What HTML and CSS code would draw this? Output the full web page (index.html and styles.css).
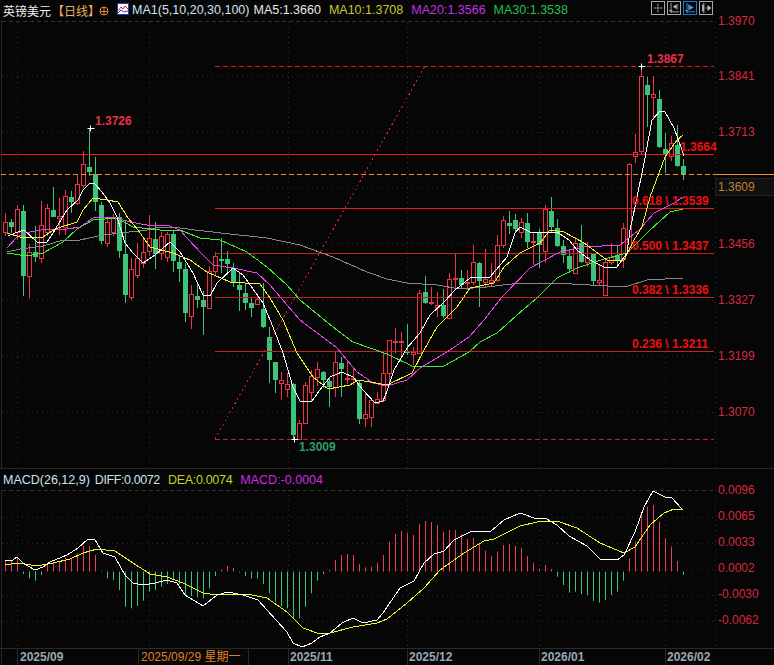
FILE: index.html
```html
<!DOCTYPE html>
<html lang="zh">
<head>
    <meta charset="UTF-8">
    <title>英镑美元 日线</title>
    <link rel="stylesheet" href="styles.css">
</head>
<body>
    <div class="topbar">
        <span class="title">英镑美元</span>
        <span class="period">【日线】</span>
        <svg class="zoom-icon" width="10" height="10" viewBox="0 0 10 10">
            <circle cx="5" cy="5" r="4" fill="none" stroke="#e08a2c"/>
            <path d="M1 5.5H9M5 1V9" stroke="#e08a2c" fill="none"/>
        </svg>
        <svg class="ma-icon" width="12" height="12" viewBox="0 0 12 12">
            <rect x="0.5" y="0.5" width="11" height="11" fill="#fff" stroke="#2a3aa8"/>
            <path d="M1 8L4 4L6 6L8 3L11 6" fill="none" stroke="#e02020"/>
            <path d="M1 10L4 7L7 9L11 8" fill="none" stroke="#2040d0"/>
        </svg>
        <span class="ma ma-name">MA1(5,10,20,30,100)</span>
        <span class="ma ma5">MA5:1.3660</span>
        <span class="ma ma10">MA10:1.3708</span>
        <span class="ma ma20">MA20:1.3566</span>
        <span class="ma ma30">MA30:1.3538</span>
        <div class="tools">
            <svg class="tool" width="14" height="14" viewBox="0 0 14 14">
                <path d="M7 2V5M7 9V12M2 7H5M9 7H12" stroke="#bbb" fill="none"/>
                <rect x="6" y="6" width="2" height="2" fill="#bbb"/>
            </svg>
            <svg class="tool" width="14" height="14" viewBox="0 0 14 14">
                <path d="M3.5 1V11.5H13M1 10H5M3.5 11V13" stroke="#bbb" fill="none"/>
                <path d="M11.5 2V9M10 3L6 5.5L10 8Z" fill="#bbb" stroke="#bbb" stroke-width="0.6"/>
            </svg>
            <svg class="tool tool-on" width="14" height="14" viewBox="0 0 14 14">
                <path d="M3.5 1V11.5H13M1 10H5M3.5 11V13" stroke="#3a9ae8" fill="none"/>
                <path d="M5 2.5L11.5 6.5L5 10Z" fill="#3a9ae8"/>
            </svg>
            <svg class="tool" width="14" height="14" viewBox="0 0 14 14">
                <path d="M4.5 1V13" stroke="#bbb" fill="none"/>
                <rect x="2.5" y="3" width="2" height="8" fill="#bbb"/>
                <path d="M5 7H9M9 4L13 7L9 10Z" fill="#bbb" stroke="#bbb" stroke-width="0.6"/>
            </svg>
        </div>
    </div>

    <svg class="chart" id="price" width="774" height="448" viewBox="0 20 774 448"></svg>

    <div class="macd-head">
        <span class="ma ma-name">MACD(26,12,9)</span>
        <span class="ma ma-name diff">DIFF:0.0072</span>
        <span class="ma dea">DEA:0.0074</span>
        <span class="ma macd">MACD:-0.0004</span>
    </div>

    <svg class="chart" id="macd" width="774" height="175" viewBox="0 490 774 175"></svg>

    <script src="chart.js"></script>
</body>
</html>
```

FILE: styles.css
```css
html, body {
    margin: 0;
    height: 100%;
    background: #060606;
    overflow: hidden;
}
body {
    font-family: "Liberation Sans", "Noto Sans CJK SC", sans-serif;
}
.topbar {
    display: flex;
    align-items: center;
    height: 20px;
    padding-left: 3px;
    box-sizing: border-box;
}
.title {
    font-family: "Noto Sans CJK SC", sans-serif;
    font-size: 12px;
    color: #f0f0f0;
}
.period {
    font-family: "Noto Sans CJK SC", sans-serif;
    font-size: 12px;
    color: #e8b060;
    width: 46px;
    margin-left: 1px;
}
.zoom-icon {
    margin-left: 1px;
    margin-top: 2px;
}
.ma-icon {
    margin-left: 8px;
    margin-bottom: 3px;
}
.ma {
    font-size: 12.5px;
    white-space: nowrap;
}
.ma-name { color: #cfe2f2; }
.ma5 { color: #e8e8e8; }
.ma10 { color: #c8c82a; }
.ma20 { color: #c030e0; }
.ma30 { color: #22c04a; }
.dea { color: #c8d020; letter-spacing: -0.3px; }
.macd { color: #d028e0; }
.diff { letter-spacing: -0.4px; }

.topbar .ma-name { margin-left: 3px; }
.topbar .ma5 { margin-left: 4px; }
.topbar .ma10, .topbar .ma20, .topbar .ma30 { margin-left: 8px; }

.tools {
    display: flex;
    gap: 2px;
    align-self: flex-start;
    margin: 1px 61px 0 auto;
}
.tool {
    border: 1px solid #a8a8a8;
    width: 12px;
    height: 12px;
}
.tool-on { border-color: #1c78c8; }

.chart {
    display: block;
    overflow: visible;
}
.chart polyline,
.chart .dotted {
    shape-rendering: crispEdges;
}
.macd-head {
    display: flex;
    gap: 8px;
    align-items: center;
    height: 22px;
    padding-left: 3px;
    box-sizing: border-box;
    border-top: 1px solid #262626;
}
.macd-head .diff { margin-left: -3px; }

.grid { stroke: #2c2c2c; stroke-dasharray: 1 4; fill: none; }
.grid-top { stroke: #333; stroke-dasharray: 4 3; fill: none; }
.frame { stroke: #2a2a2a; fill: none; }

.axis-price { font-size: 12px; fill: #d8283e; }
.axis-last { font-size: 12px; fill: #c08030; }
.last-box { fill: #101010; stroke: #222; }
.mark { font-size: 12px; font-weight: bold; fill: #e8304a; }
.mark-low { font-size: 12px; font-weight: bold; fill: #2e9c6a; }
.fib { font-size: 12px; font-weight: bold; fill: #f00f0f; }
.date { font-size: 12px; font-weight: bold; fill: #9aa8b4; }
.date-on {
    font-family: "Liberation Sans", "Noto Sans CJK SC", sans-serif;
    font-size: 12px;
    fill: #e08224;
}
```

FILE: chart.js
```js
const NS = 'http://www.w3.org/2000/svg';
const priceSvg = document.getElementById('price');
const macdSvg = document.getElementById('macd');

function add(svg, tag, attrs, text) {
    const el = document.createElementNS(NS, tag);
    for (const k in attrs) el.setAttribute(k, attrs[k]);
    if (text) el.textContent = text;
    svg.appendChild(el);
    return el;
}

function hline(svg, y, x1, x2, attrs) {
    add(svg, 'line', Object.assign({ x1: x1, x2: x2, y1: y, y2: y }, attrs));
}

function poly(svg, pts, color) {
    add(svg, 'polyline', {
        points: pts.join(' '),
        fill: 'none',
        stroke: color,
        'stroke-width': 1
    });
}

function cx(i) {
    return 5.5 + 6 * i;
}

const UP = '#ee3348';
const DOWN = '#3cc47c';
const BG = '#060606';

// up/down, wick top, body top, body bottom, wick bottom
const candles = [
    'u 213 222 232 236', 'd 219 222 227 233', 'u 205 209 232 240', 'd 205 211 276 296',
    'u 244 252 276 298', 'd 226 252 257 262', 'u 201 225 258 263', 'u 204 208 232 236',
    'd 187 210 217 217', 'u 198 216 218 235', 'u 190 196 227 235', 'd 191 197 202 213',
    'u 175 184 203 205', 'u 151 164 185 188', 'd 128 167 172 176', 'd 157 174 202 211',
    'd 202 205 241 244', 'u 217 222 243 247', 'u 214 218 232 236', 'd 213 217 251 258',
    'd 220 254 295 303', 'u 258 269 297 300', 'u 243 258 275 278', 'u 238 252 263 268',
    'u 215 238 251 256', 'd 222 239 254 269', 'u 232 236 253 260', 'u 232 234 257 262',
    'd 230 234 261 272', 'd 255 262 269 282', 'd 263 269 313 322', 'u 285 294 316 329',
    'd 282 296 300 308', 'd 291 300 307 335', 'u 266 271 308 309', 'u 252 256 271 275',
    'd 238 259 261 273', 'd 251 259 264 275', 'd 263 268 283 287', 'd 272 285 290 311',
    'd 283 293 303 310', 'd 298 303 308 317', 'u 295 299 304 305', 'd 283 309 327 328',
    'd 327 337 360 383', 'd 362 362 380 393', 'u 372 380 383 400', 'u 373 384 389 397',
    'd 383 384 435 439', 'u 420 423 439 439', 'u 382 385 423 423', 'u 370 376 392 401',
    'u 362 369 377 386', 'd 371 372 380 388', 'd 377 381 387 407', 'u 351 362 387 397',
    'd 357 363 369 397', 'u 360 378 379 384', 'u 368 378 379 385', 'd 380 383 419 424',
    'u 393 414 418 427', 'u 398 400 417 427', 'u 392 399 403 404', 'u 353 373 400 402',
    'u 340 340 373 383', 'u 328 341 342 353', 'u 332 341 342 357', 'd 324 352 353 355',
    'u 347 352 354 365', 'u 290 293 353 354', 'd 276 292 303 304', 'u 287 302 303 305',
    'u 292 305 307 317', 'd 289 305 316 318', 'u 273 279 318 319', 'u 253 278 279 288',
    'd 270 278 285 288', 'u 270 282 283 290', 'u 245 262 282 285', 'd 262 263 281 307',
    'u 249 279 282 287', 'u 263 280 282 287', 'u 235 245 280 282', 'u 216 220 245 248',
    'd 211 223 226 234', 'd 214 220 229 232', 'u 218 222 232 238', 'd 213 223 242 248',
    'u 232 241 242 265', 'd 229 233 245 268', 'u 205 209 251 263', 'd 197 211 227 232',
    'd 219 228 246 247', 'd 240 246 255 263', 'd 250 256 269 273', 'u 237 243 273 274',
    'd 225 243 262 263', 'u 242 257 262 267', 'd 253 254 281 285', 'u 265 280 282 285',
    'u 258 262 295 296', 'u 243 257 262 265', 'd 245 255 260 265', 'u 223 228 259 268',
    'u 163 164 247 252', 'u 134 152 156 163', 'u 65 76 151 154', 'd 77 85 95 127',
    'u 76 94 97 120', 'd 90 99 147 148', 'd 133 149 155 173', 'u 136 143 156 161',
    'd 125 145 166 167', 'd 159 166 174 180'
];

const ma5 = ['8,236', '15,233', '24,230', '37,242', '47,242', '55,230', '56,228', '67,210', '78,200', '83,190', '90,183', '95,184', '102,192', '110,203', '117,217', '121,230', '125,243', '133,253', '143,263', '155,255', '170,242', '180,252', '193,273', '203,295', '210,296', '217,283', '233,268', '243,275', '263,303', '273,327', '283,353', '293,387', '300,401', '312,401', '322,387', '330,377', '342,372', '353,377', '363,390', '375,403', '383,401', '387,391', '394,370', '407,348', '420,333', '430,315', '445,301', '455,290', '470,278', '490,277', '507,257', '515,233', '520,227', '530,232', '540,233', '544,232', '557,232', '569,240', '577,250', '590,260', '604,267', '617,267', '627,253', '630,230', '635,207', '644,163', '652,120', '660,111', '665,112', '674,128', '682,150', '684,156'];
const ma10 = ['7,233', '20,237', '43,237', '55,229', '77,222', '83,210', '93,198', '107,200', '118,202', '128,218', '138,230', '150,247', '173,253', '190,260', '207,272', '230,282', '260,284', '270,298', '283,320', '297,353', '313,377', '328,389', '350,385', '358,380', '370,382', '387,385', '412,373', '424,350', '437,327', '457,307', '470,288', '494,283', '504,267', '520,253', '540,243', '550,230', '564,232', '584,243', '607,260', '624,260', '634,240', '642,227', '650,197', '665,157', '677,140', '683,135'];
const ma20 = ['7,248', '17,237', '25,233', '47,229', '67,229', '80,227', '93,218', '113,217', '130,222', '147,225', '167,225', '180,230', '187,238', '203,255', '213,265', '233,268', '257,273', '270,285', '287,305', '300,320', '320,335', '337,348', '357,372', '373,383', '387,386', '407,380', '420,368', '447,352', '469,337', '484,320', '502,297', '530,268', '560,252', '584,247', '620,245', '639,230', '654,213', '674,203', '683,197'];
const ma30 = ['7,253', '27,256', '43,253', '63,242', '77,229', '93,220', '117,218', '133,227', '160,230', '180,230', '200,238', '220,240', '247,252', '267,267', '287,285', '300,300', '333,327', '353,342', '387,354', '412,366', '444,366', '469,352', '480,342', '497,333', '517,315', '537,298', '557,278', '577,268', '604,259', '627,253', '650,230', '670,212', '683,209'];
const ma100 = ['7,252', '20,249', '43,246', '63,240', '80,240', '103,235', '147,230', '160,227', '180,228', '195,230', '230,234', '267,238', '300,245', '333,257', '367,272', '387,279', '407,283', '437,285', '460,289', '487,287', '520,283', '554,283', '590,285', '625,287', '647,280', '683,278'];

// macd histogram: y of the free end of each bar, times 3
const hist = [300, 300, 290, 342, 355, 362, 345, 315, 310, 305, 292, 295, 280, 258, 258, 285, 336, 355, 360, 390, 440, 445, 438, 422, 395, 390, 380, 372, 360, 372, 405, 408, 412, 415, 385, 348, 328, 318, 324, 337, 348, 356, 355, 372, 400, 425, 440, 445, 475, 475, 440, 400, 362, 342, 330, 300, 285, 282, 285, 312, 322, 320, 308, 285, 245, 222, 213, 218, 225, 192, 183, 186, 195, 215, 210, 210, 222, 237, 233, 250, 272, 288, 275, 255, 252, 258, 263, 288, 308, 326, 315, 327, 350, 375, 398, 395, 402, 405, 423, 428, 420, 405, 395, 362, 295, 245, 165, 140, 135, 185, 235, 260, 303, 345];

const diff = ['5,560', '13,560', '17,557', '23,563', '35,570', '43,567', '50,562', '67,555', '78,548', '88,539', '95,540', '103,553', '115,557', '125,575', '133,583', '143,585', '155,583', '167,580', '177,583', '185,595', '203,606', '217,595', '228,592', '243,595', '258,600', '267,610', '287,632', '293,643', '302,647', '312,643', '320,637', '330,633', '342,623', '353,618', '363,623', '377,620', '383,613', '387,607', '400,588', '414,581', '424,563', '434,554', '444,551', '454,540', '472,531', '490,532', '504,520', '520,513', '534,518', '545,518', '557,525', '569,536', '587,546', '600,559', '617,560', '624,555', '635,532', '644,507', '653,491', '665,497', '672,498', '682,509'];
const dea = ['5,565', '18,563', '37,566', '53,563', '70,559', '83,553', '97,549', '115,551', '133,563', '150,574', '167,577', '183,583', '203,593', '217,595', '247,594', '267,598', '287,612', '303,628', '317,633', '330,633', '353,627', '377,623', '387,619', '407,603', '424,588', '440,570', '464,553', '484,541', '494,539', '520,526', '537,522', '557,521', '577,528', '600,543', '624,553', '635,547', '650,525', '664,513', '674,509', '683,510'];

// grid
const gridX = [17, 149, 288, 407, 539, 665];
[76, 132, 188, 244, 300, 356, 412].forEach(y => hline(priceSvg, y + 0.5, 2, 714, { class: 'grid' }));
hline(priceSvg, 21.5, 2, 714, { class: 'grid-top' });
gridX.forEach(x => add(priceSvg, 'line', { x1: x + 0.5, x2: x + 0.5, y1: 22, y2: 468, class: 'grid' }));
add(priceSvg, 'line', { x1: 715.5, x2: 715.5, y1: 22, y2: 468, class: 'grid' });
add(priceSvg, 'line', { x1: 1.5, x2: 1.5, y1: 20, y2: 468, class: 'frame' });

// candles
candles.forEach((row, i) => {
    const [kind, wt, top, bottom, wb] = row.split(' ');
    const x = cx(i);
    const color = kind === 'u' ? UP : DOWN;
    add(priceSvg, 'line', { x1: x, x2: x, y1: wt, y2: wb, stroke: color });
    if (kind === 'u') {
        add(priceSvg, 'rect', {
            x: x - 2, y: +top + 0.5, width: 4, height: Math.max(bottom - top, 1),
            fill: BG, stroke: color
        });
    } else {
        add(priceSvg, 'rect', { x: x - 2.5, y: top, width: 5, height: Math.max(bottom - top, 1), fill: color });
    }
});

// fibonacci and trend lines
const RED = '#f01515';
const DARK = '#c81e1e';
add(priceSvg, 'line', { x1: 215, y1: 439, x2: 425, y2: 66, stroke: '#e02020', 'stroke-dasharray': '2 3', class: 'dotted' });
hline(priceSvg, 66.5, 215, 714, { stroke: RED, 'stroke-dasharray': '5 3' });
hline(priceSvg, 154.5, 1, 714, { stroke: RED });
hline(priceSvg, 174.5, 1, 714, { stroke: '#f09030', 'stroke-dasharray': '5 3' });
hline(priceSvg, 174.5, 714, 774, { stroke: '#f09030' });
hline(priceSvg, 208.5, 215, 714, { stroke: RED });
hline(priceSvg, 253.5, 215, 714, { stroke: DARK });
hline(priceSvg, 297.5, 215, 714, { stroke: DARK });
hline(priceSvg, 351.5, 215, 714, { stroke: DARK });
hline(priceSvg, 439.5, 215, 714, { stroke: DARK, 'stroke-dasharray': '5 3' });

poly(priceSvg, ma100, '#888888');
poly(priceSvg, ma30, '#40f030');
poly(priceSvg, ma20, '#f040f0');
poly(priceSvg, ma10, '#f4f420');
poly(priceSvg, ma5, '#ffffff');

// high/low markers
[[90.5, 128.5], [641.5, 66.5], [294.5, 439.5]].forEach(([x, y]) => {
    hline(priceSvg, y, x - 3, x + 4, { stroke: '#fff' });
    add(priceSvg, 'line', { x1: x, x2: x, y1: y - 3, y2: y + 3, stroke: '#fff' });
});

// price labels
[['1.3970', 25], ['1.3841', 80], ['1.3713', 136], ['1.3456', 248], ['1.3327', 304], ['1.3199', 360], ['1.3070', 416]]
    .forEach(([t, y]) => add(priceSvg, 'text', { x: 718, y: y, class: 'axis-price' }, t));
add(priceSvg, 'rect', { x: 715.5, y: 178.5, width: 60, height: 17, class: 'last-box' });
add(priceSvg, 'text', { x: 718, y: 191, class: 'axis-last' }, '1.3609');

add(priceSvg, 'text', { x: 95, y: 125, class: 'mark' }, '1.3726');
add(priceSvg, 'text', { x: 647, y: 63, class: 'mark' }, '1.3867');
add(priceSvg, 'text', { x: 299, y: 451, class: 'mark-low' }, '1.3009');
add(priceSvg, 'text', { x: 680, y: 151, class: 'fib' }, '1.3664');
[['0.618 \\ 1.3539', 205], ['0.500 \\ 1.3437', 250], ['0.382 \\ 1.3336', 294], ['0.236 \\ 1.3211', 348]]
    .forEach(([t, y]) => add(priceSvg, 'text', { x: 632, y: y, class: 'fib' }, t));

// macd panel
[517, 543, 569, 595, 621].forEach(y => hline(macdSvg, y + 0.5, 2, 714, { class: 'grid' }));
hline(macdSvg, 490.5, 2, 714, { class: 'grid-top' });
gridX.forEach(x => add(macdSvg, 'line', { x1: x + 0.5, x2: x + 0.5, y1: 490, y2: 648, class: 'grid' }));
add(macdSvg, 'line', { x1: 715.5, x2: 715.5, y1: 490, y2: 648, class: 'grid' });
add(macdSvg, 'line', { x1: 1.5, x2: 1.5, y1: 490, y2: 665, class: 'frame' });
hline(macdSvg, 648.5, 0, 774, { class: 'frame' });
[17, 138, 248, 288, 407, 539, 665].forEach(x => add(macdSvg, 'line', { x1: x + 0.5, x2: x + 0.5, y1: 648, y2: 665, class: 'frame' }));

const BASE = 571.5;
hist.forEach((v, i) => {
    const y = 460 + v / 3;
    add(macdSvg, 'line', { x1: cx(i), x2: cx(i), y1: BASE, y2: y, stroke: y < BASE ? '#f03c55' : '#3cc47c' });
});

poly(macdSvg, dea, '#f4f420');
poly(macdSvg, diff, '#ffffff');

[['0.0096', 494], ['0.0065', 520], ['0.0033', 546], ['0.0002', 572], ['-0.0030', 598], ['-0.0062', 624]]
    .forEach(([t, y]) => add(macdSvg, 'text', { x: 718, y: y, class: 'axis-price' }, t));

[['2025/09', 20], ['2025/11', 290], ['2025/12', 409], ['2026/01', 541], ['2026/02', 667]]
    .forEach(([t, x]) => add(macdSvg, 'text', { x: x, y: 661, class: 'date' }, t));
add(macdSvg, 'text', { x: 141, y: 661, class: 'date-on' }, '2025/09/29 星期一');
```
